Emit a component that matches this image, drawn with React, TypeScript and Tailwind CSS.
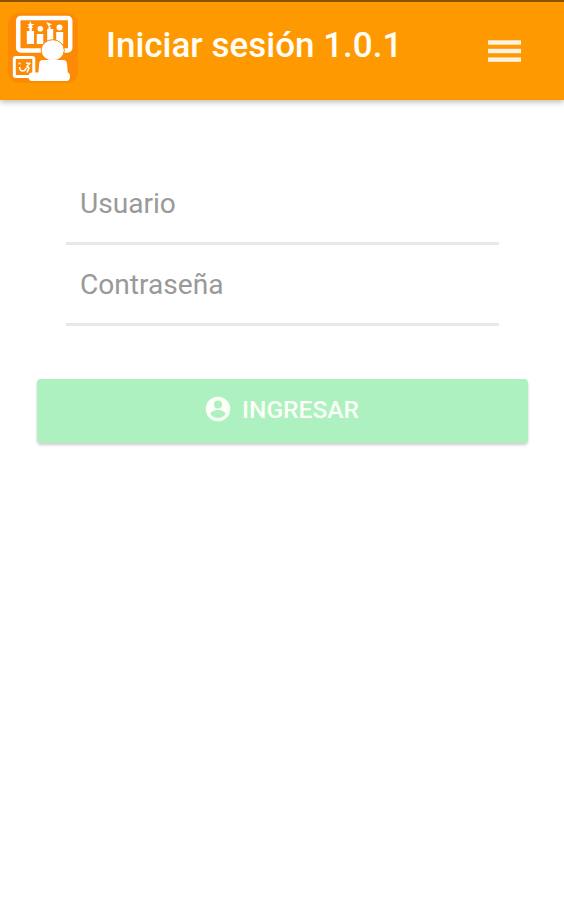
function Logo() {
  return (
    <svg viewBox="0 0 70 70" className="h-[70px] w-[70px]" aria-hidden="true">
      <rect width="70" height="70" rx="11" fill="#fc8a06" />
      {/* Whiteboard */}
      <rect x="10.2" y="5" width="52" height="32.4" rx="2.5" fill="none" stroke="#fff" strokeWidth="4.5" />
      <g fill="#fff">
        <rect x="18.8" y="18" width="7.2" height="13" />
        <rect x="28.8" y="21" width="6.5" height="10" />
        <rect x="39.2" y="16" width="6" height="15" />
        <rect x="48.2" y="19" width="7" height="12" />
        <circle cx="32.3" cy="15.8" r="2.8" />
        <circle cx="51.5" cy="14.5" r="3" />
        <path d="M22 8l1.6 3h3l-3 2 1.6 2h-1.4v3h-2.4v-3h-2.2l2-2-1.8-2h2z" />
        <path d="M38 9l6 2.2-4 2.2h2.5V16h-2v-3z" />
      </g>
      {/* Tablet */}
      <rect x="6.3" y="44.5" width="19.5" height="19" rx="1.5" fill="#fc8a06" stroke="#fff" strokeWidth="3" />
      <path
        d="M10.5 50.5h2M11.5 54q0 5 5 3.5l2-2.5M18 50l3.5.5-2.5 3 2 1.5-2 4.5"
        fill="none"
        stroke="#fff"
        strokeWidth="1.6"
      />
      {/* Teacher */}
      <ellipse cx="44.7" cy="37.3" rx="11.6" ry="10.6" fill="#fff" stroke="#fc8a06" strokeWidth="1" />
      <path
        d="M34.5 47h20.7c2.5 0 3.6 1.2 3.8 3.5l.8 9c1.7.5 2.2 2 2.2 3.8 0 3-1 4.7-3.5 4.7H24c-2.5 0-3.5-1.7-3.5-4.5 0-2.7 1.2-4 3.7-4h6.2l.8-9c.2-2.2 1.3-3.5 3.3-3.5z"
        fill="#fff"
      />
    </svg>
  );
}

function MenuIcon() {
  return (
    <svg viewBox="0 0 33 22" className="h-[22px] w-[33px]" fill="#fff4e4" aria-hidden="true">
      <rect y="0.3" width="33" height="4.4" />
      <rect y="8.8" width="33" height="4.4" />
      <rect y="17.4" width="33" height="4.4" />
    </svg>
  );
}

function ContactIcon() {
  return (
    <svg viewBox="0 0 26 26" className="h-[26px] w-[26px]" fill="currentColor" aria-hidden="true">
      <path
        fillRule="evenodd"
        d="M13 .7a12.3 12.3 0 1 0 0 24.6A12.3 12.3 0 0 0 13 .7zm0 3.7a4 4 0 1 1 0 8 4 4 0 0 1 0-8zm0 17.5c-3.1 0-5.9-1.6-7.5-4 .1-2.5 5-3.9 7.5-3.9s7.4 1.4 7.5 3.9c-1.6 2.4-4.4 4-7.5 4z"
      />
    </svg>
  );
}

function Header() {
  return (
    <header className="flex h-[100px] items-start border-t-2 border-[#8c5200] bg-[#ff9902] pl-2 shadow-[0_2px_6px_rgba(0,0,0,0.28)]">
      <div className="mt-[11px]">
        <Logo />
      </div>
      <h1 className="mt-6 ml-7 flex-1 text-[35px] leading-10 font-medium whitespace-nowrap text-[#fffdf5]">
        Iniciar sesión 1.0.1
      </h1>
      <button type="button" aria-label="Menú" className="mt-[38px] mr-[43px]">
        <MenuIcon />
      </button>
    </header>
  );
}

function Field({ label, type }: { label: string; type: string }) {
  return (
    <input
      type={type}
      placeholder={label}
      aria-label={label}
      className="h-[81px] w-full border-b-[3px] border-[#e8e8e8] px-3.5 text-[28.1px] outline-none placeholder:text-[#999999]"
    />
  );
}

export default function App() {
  return (
    <div className="min-h-screen bg-white font-['Roboto',sans-serif]">
      <Header />
      <form className="pt-16">
        <div className="mr-[65px] ml-[66px] flex flex-col">
          <Field label="Usuario" type="text" />
          <Field label="Contraseña" type="password" />
        </div>
        <button
          type="button"
          className="mt-[53px] ml-[37px] flex h-16 w-[491px] items-center justify-center gap-[11px] rounded-[4px] bg-[#adf1c0] pr-px pb-[5px] text-[24.5px] font-medium text-[#fbfff7] shadow-[0_2px_3px_rgba(0,0,0,0.2)]"
        >
          <ContactIcon />
          <span className="pt-0.5 leading-8">INGRESAR</span>
        </button>
      </form>
    </div>
  );
}
